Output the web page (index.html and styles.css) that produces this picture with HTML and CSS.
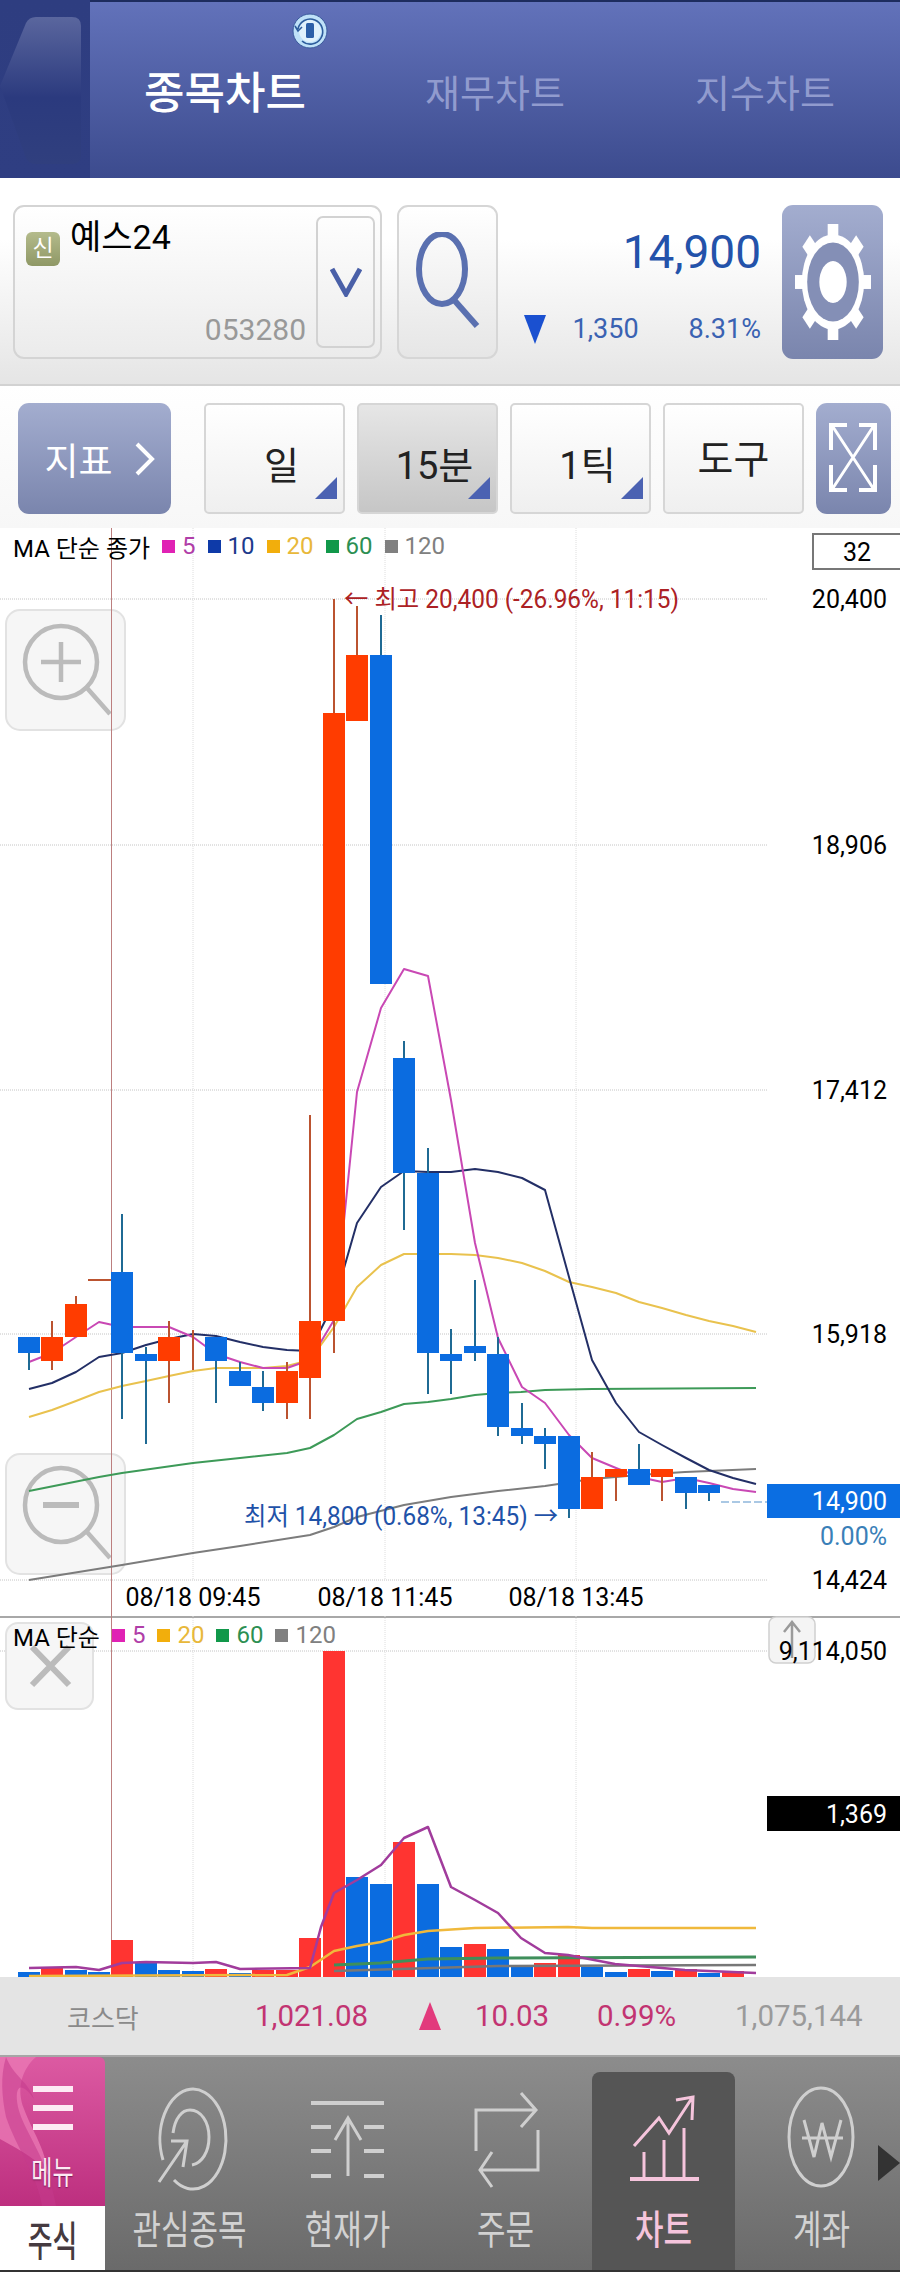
FILE: index.html
```html
<!DOCTYPE html>
<html lang="ko">
<head>
<meta charset="utf-8">
<title>종목차트</title>
<link rel="stylesheet" href="styles.css">
</head>
<body>
<div class="page">

  <header class="topbar">
    <div class="back">
      <svg class="back-icon" viewBox="0 0 90 178">
        <defs>
          <linearGradient id="backFill" x1="0" y1="0" x2="0" y2="1">
            <stop offset="0" stop-color="#5a669e"/>
            <stop offset="0.55" stop-color="#2b3a7e"/>
            <stop offset="1" stop-color="#303f7e"/>
          </linearGradient>
        </defs>
        <path d="M0 86 L26 23 Q29 17 36 17 H72 Q81 17 81 26 V155 Q81 164 72 164 H36 Q29 164 26 158 Z" fill="url(#backFill)"/>
      </svg>
    </div>
    <nav class="tabs">
      <div class="tab tab-on">종목차트</div>
      <div class="tab">재무차트</div>
      <div class="tab">지수차트</div>
    </nav>
    <svg class="sync" viewBox="0 0 38 36">
      <circle cx="19" cy="18" r="17" fill="#bfe1f8" stroke="#3a5a9c" stroke-width="1"/>
      <circle cx="19" cy="18" r="11" fill="#e0f1fc"/>
      <path d="M7 16 A12.5 12.5 0 1 1 11 28 M4 13 L7 18 L11 14" fill="none" stroke="#2d5c9c" stroke-width="1.6"/>
      <rect x="15" y="10" width="8" height="15" rx="1.5" fill="#2c5fa8"/>
    </svg>
  </header>

  <section class="stock">
    <div class="namebox">
      <div class="nameinfo">
        <div class="nameline"><span class="badge">신</span><span class="name">예스24</span></div>
        <div class="code">053280</div>
      </div>
      <div class="combo">
        <svg width="32" height="30" viewBox="0 0 32 30"><path d="M2 2 L16 27 L30 2" fill="none" stroke="#4a60a8" stroke-width="5"/></svg>
      </div>
    </div>
    <div class="searchbtn">
      <svg width="70" height="100" viewBox="0 0 70 100">
        <ellipse cx="29" cy="37" rx="23" ry="35" fill="none" stroke="#5a70b0" stroke-width="6"/>
        <path d="M42 69 L64 94" stroke="#5a70b0" stroke-width="6"/>
      </svg>
    </div>
    <div class="quote">
      <div class="price">14,900</div>
      <div class="change">
        <span class="down"></span>
        <span class="diff">1,350</span>
        <span class="rate">8.31%</span>
      </div>
    </div>
    <div class="gearbtn">
      <svg width="76" height="116" viewBox="-50 -50 100 100" preserveAspectRatio="none">
        <g fill="#fff">
          <circle r="41"/>
          <rect x="-7" y="-50" width="14" height="100"/>
          <rect x="-7" y="-50" width="14" height="100" transform="rotate(45)"/>
          <rect x="-50" y="-6" width="100" height="12"/>
          <rect x="-7" y="-50" width="14" height="100" transform="rotate(135)"/>
        </g>
        <circle r="34" fill="#848fb6"/>
        <circle r="18" fill="#fff"/>
      </svg>
    </div>
  </section>

  <section class="toolbar">
    <div class="slate-btn indicator">
      <span>지표</span>
      <svg width="20" height="34" viewBox="0 0 20 34"><path d="M2 2 L17 17 L2 32" fill="none" stroke="#fff" stroke-width="4"/></svg>
    </div>
    <div class="period period-first">일<i class="corner"></i></div>
    <div class="period period-on">15분<i class="corner"></i></div>
    <div class="period">1틱<i class="corner"></i></div>
    <div class="period tool">도구</div>
    <div class="slate-btn expand">
      <svg width="75" height="111" viewBox="814 403 75 111" fill="none" stroke="#fff" stroke-width="4">
        <path d="M829 450V425H845M857 425H873V450M829 465V490H845M857 490H873V465"/>
        <path d="M831 427L871 488M871 427L831 488" stroke-width="3"/>
      </svg>
    </div>
  </section>

  <section class="chart">
    <svg class="plot" viewBox="0 528 900 1088">
      <g class="grid">
        <path d="M0 599H767M0 845H767M0 1090H767M0 1334H767M0 1580H767"/>
        <path class="gridv" d="M193 528V1580M385 528V1580M576 528V1580"/>
      </g>

      <g class="zoom-tile">
        <rect x="6" y="610" width="119" height="120" rx="14"/>
        <rect x="6" y="1454" width="119" height="120" rx="14"/>
      </g>
      <g class="zoom-mark">
        <circle cx="61" cy="662" r="36"/>
        <path d="M87 688 L110 714 M41 662 H81 M61 642 V682"/>
        <ellipse cx="61" cy="1505" rx="36" ry="37"/>
        <path d="M87 1532 L110 1558"/>
        <path d="M43 1505 H79" stroke-width="6"/>
      </g>
      <path class="cursor" d="M111.5 528V1616"/>

      <path class="ma ma60" d="M29 1491L99 1477L122 1473L193 1463L240 1458L287 1453L310 1448L334 1435L357 1419L381 1412L404 1404L428 1402L451 1399L475 1395L498 1393L521 1392L545 1390L592 1389L756 1388"/>
      <path class="ma ma120" d="M29 1580L122 1565L193 1553L240 1546L310 1535L334 1527L357 1517L404 1505L451 1497L498 1491L545 1486L592 1479L639 1475L685 1472L756 1469"/>
      <path class="ma ma20" d="M29 1417L52 1410L76 1401L99 1392L122 1386L146 1381L169 1376L193 1371L216 1368L263 1368L287 1366L310 1360L334 1327L357 1287L381 1265L404 1254L451 1254L475 1255L498 1258L522 1263L545 1271L569 1282L592 1287L616 1293L639 1302L662 1308L686 1315L709 1321L733 1326L756 1332"/>
      <path class="ma ma10" d="M29 1389L52 1383L76 1372L99 1357L122 1353L146 1345L169 1339L193 1334L216 1336L240 1342L263 1347L287 1350L310 1351L334 1303L357 1223L381 1187L404 1171L428 1172L451 1172L475 1169L498 1172L522 1178L545 1190L569 1277L592 1360L616 1403L639 1432L662 1445L686 1458L709 1470L733 1478L756 1484"/>
      <path class="ma ma5" d="M29 1362L52 1353L76 1337L99 1322L122 1327L146 1327L169 1327L193 1337L216 1354L240 1362L263 1368L287 1368L310 1360L334 1320L357 1092L381 1008L404 969L428 976L451 1100L475 1243L498 1338L522 1387L545 1403L569 1435L592 1458L616 1468L639 1477L662 1482L686 1478L709 1483L733 1489L756 1492"/>

      <path class="wick wick-red" d="M52 1321V1370M76 1296V1304M88 1280H112M169 1321V1403M193 1330V1370M287 1362V1419M310 1115V1419M334 599V1353M357 606V655M592 1452V1477M616 1477V1501M662 1477V1501"/>
      <path class="wick wick-blue" d="M29 1353V1370M122 1214V1419M146 1347V1444M216 1361V1403M240 1362V1371M263 1371V1411M381 615V655M404 1041V1230M428 1148V1394M451 1329V1394M475 1280V1361M498 1337V1436M522 1403V1444M545 1428V1469M569 1509V1518M639 1444V1469M686 1493V1509M709 1493V1501"/>
      <path class="body-red" d="M41 1337h22v24h-22zM65 1304h22v33h-22zM158 1337h22v24h-22zM276 1371h22v32h-22zM299 1321h22v57h-22zM323 713h22v608h-22zM346 655h22v66h-22zM581 1477h22v32h-22zM605 1469h22v8h-22zM651 1469h22v8h-22z"/>
      <path class="body-blue" d="M18 1337h22v16h-22zM111 1272h22v81h-22zM135 1354h22v7h-22zM205 1337h22v24h-22zM229 1371h22v15h-22zM252 1387h22v16h-22zM370 655h22v329h-22zM393 1058h22v115h-22zM417 1173h22v180h-22zM440 1354h22v7h-22zM464 1346h22v7h-22zM487 1354h22v73h-22zM511 1428h22v8h-22zM534 1436h22v8h-22zM558 1436h22v73h-22zM628 1469h22v16h-22zM675 1477h22v16h-22zM698 1485h22v8h-22z"/>
      <path class="lastdash" d="M721 1502H767"/>

      <text class="note note-high" x="344" y="608" textLength="335" lengthAdjust="spacingAndGlyphs">← 최고 20,400 (-26.96%, 11:15)</text>
      <text class="note note-low" x="244" y="1525" textLength="314" lengthAdjust="spacingAndGlyphs">최저 14,800 (0.68%, 13:45) →</text>

      <g class="axis">
        <text x="887" y="608">20,400</text>
        <text x="887" y="854">18,906</text>
        <text x="887" y="1099">17,412</text>
        <text x="887" y="1343">15,918</text>
        <text x="887" y="1589">14,424</text>
      </g>
      <rect class="lasttag" x="767" y="1484" width="133" height="34"/>
      <g class="axis">
        <text class="on-tag" x="887" y="1510">14,900</text>
        <text class="rate-zero" x="887" y="1545">0.00%</text>
      </g>
      <g class="axis dates">
        <text x="193" y="1606">08/18 09:45</text>
        <text x="385" y="1606">08/18 11:45</text>
        <text x="576" y="1606">08/18 13:45</text>
      </g>
    </svg>
    <div class="legend">
      <span class="legend-title">MA 단순 종가</span>
      <span class="key c5">5</span>
      <span class="key c10">10</span>
      <span class="key c20">20</span>
      <span class="key c60">60</span>
      <span class="key c120">120</span>
    </div>
    <div class="rangebox">32</div>
  </section>

  <section class="volume">
    <svg class="plot" viewBox="0 1616 900 361">
      <g class="grid">
        <path d="M0 1651H767"/>
        <path class="gridv" d="M193 1616V1977M385 1616V1977M576 1616V1977"/>
      </g>
      <path class="cursor" d="M111.5 1616V1977"/>
      <rect class="close-tile" x="6" y="1623" width="87" height="86" rx="12"/>
      <path class="close-mark" d="M32 1647 L69 1685 M69 1647 L32 1685"/>
      <rect class="up-tile" x="769" y="1617" width="46" height="46" rx="7"/>
      <path class="up-mark" d="M792 1658 V1622 M784 1632 L792 1622 L800 1632"/>

      <path class="vol-red" d="M41 1968h22v9h-22zM111 1940h22v37h-22zM205 1969h22v8h-22zM252 1970h22v7h-22zM276 1970h22v7h-22zM299 1938h22v39h-22zM323 1651h22v326h-22zM393 1842h22v135h-22zM464 1944h22v33h-22zM534 1963h22v14h-22zM558 1955h22v22h-22zM628 1969h22v8h-22zM675 1969h22v8h-22zM722 1971h22v6h-22z"/>
      <path class="vol-blue" d="M18 1972h22v5h-22zM65 1970h22v7h-22zM88 1972h22v5h-22zM135 1963h22v14h-22zM158 1970h22v7h-22zM182 1971h22v6h-22zM229 1973h22v4h-22zM346 1877h22v100h-22zM370 1884h22v93h-22zM417 1884h22v93h-22zM440 1947h22v30h-22zM487 1949h22v28h-22zM511 1965h22v12h-22zM581 1967h22v10h-22zM605 1972h22v5h-22zM651 1971h22v6h-22zM698 1973h22v4h-22z"/>

      <path class="ma vma120" d="M334 1971L498 1966L756 1965"/>
      <path class="ma vma60" d="M334 1965L381 1963L428 1959L498 1958L756 1957"/>
      <path class="ma vma20" d="M29 1976L287 1975L310 1967L334 1951L357 1946L381 1942L404 1935L428 1931L475 1928L568 1927L592 1928L756 1928"/>
      <path class="ma vma5" d="M29 1968L76 1967L99 1970L122 1963L146 1962L193 1963L216 1962L240 1969L310 1968L321 1927L334 1893L357 1880L381 1865L404 1838L428 1827L451 1887L475 1900L498 1913L521 1938L545 1953L568 1955L615 1964L662 1968L685 1970L756 1973"/>

      <g class="axis">
        <text x="887" y="1660">9,114,050</text>
      </g>
      <rect class="volumetag" x="767" y="1796" width="133" height="35"/>
      <g class="axis">
        <text class="on-tag" x="887" y="1823">1,369</text>
      </g>
    </svg>
    <div class="legend">
      <span class="legend-title">MA 단순</span>
      <span class="key c5">5</span>
      <span class="key c20">20</span>
      <span class="key c60">60</span>
      <span class="key c120">120</span>
    </div>
  </section>

  <section class="index">
    <span class="idx-name">코스닥</span>
    <span class="idx-val">1,021.08</span>
    <span class="up"></span>
    <span class="idx-diff">10.03</span>
    <span class="idx-rate">0.99%</span>
    <span class="idx-vol">1,075,144</span>
  </section>

  <footer class="nav">
    <div class="side">
      <div class="menu">
        <svg class="swirl" viewBox="0 0 105 149">
          <path d="M0 0H36 C22 12 16 32 24 52 C32 74 46 92 48 118 C40 104 22 94 0 82 Z" fill="#ea78b4" opacity=".8"/>
          <path d="M6 0 C14 20 28 24 34 42 C20 22 14 30 18 50 C24 76 48 100 56 149 H42 C38 120 16 90 6 60 C2 40 0 20 6 0Z" fill="#c43a8c" opacity=".55"/>
        </svg>
        <i class="bar"></i><i class="bar"></i><i class="bar"></i>
        <span class="menu-text">메뉴</span>
      </div>
      <div class="market"><span class="market-text">주식</span></div>
    </div>
    <div class="navtabs">
      <div class="navtab">
        <svg viewBox="119 2072 143 133">
          <path d="M164 2160 A33 50 0 1 1 175 2180"/>
          <path d="M174 2133 C176 2118 183 2110 191 2110 C202 2110 210 2122 210 2137 C210 2152 203 2163 193 2165"/>
          <path d="M160 2182 L188 2141 M172 2141 L188 2141 L184 2167"/>
        </svg>
        <span class="tall">관심종목</span>
      </div>
      <div class="navtab">
        <svg viewBox="277 2072 143 133">
          <path d="M312 2103H385M312 2127H332M365 2127H385M312 2151H332M365 2151H385M312 2176H332M365 2176H385" stroke-width="4"/>
          <path d="M349 2176V2118M336 2140L349 2118L362 2140"/>
        </svg>
        <span class="tall">현재가</span>
      </div>
      <div class="navtab">
        <svg viewBox="433 2072 143 133">
          <path d="M475 2151V2110H534M520 2093L535 2110L520 2127"/>
          <path d="M537 2130V2170H480M491 2152L479 2170L491 2187"/>
        </svg>
        <span class="tall">주문</span>
      </div>
      <div class="navtab navtab-on">
        <svg viewBox="592 2072 143 133">
          <path d="M630 2179H699" stroke-width="4"/>
          <path d="M644 2179V2152M664 2179V2140M684 2179V2128"/>
          <path d="M634 2146L659 2118L669 2133L692 2098M676 2100L693 2097L692 2120"/>
        </svg>
        <span class="tall">차트</span>
      </div>
      <div class="navtab">
        <svg viewBox="750 2072 143 133">
          <ellipse cx="821" cy="2137" rx="32" ry="49"/>
          <path d="M804 2120L814 2157L822 2123L831 2157L841 2120M802 2138H843"/>
        </svg>
        <span class="tall">계좌</span>
      </div>
    </div>
    <i class="navmore"></i>
  </footer>

</div>
</body>
</html>
```

FILE: styles.css
```css
* {
  box-sizing: border-box;
}
body {
  margin: 0;
  background: #fff;
  font-family: Roboto, "Noto Sans CJK KR", sans-serif;
}
.page {
  width: 900px;
  height: 2272px;
  overflow: hidden;
}

/* top tabs */
.topbar {
  position: relative;
  display: flex;
  height: 178px;
  border-top: 2px solid #1d2c5e;
  background: linear-gradient(#6272ba, #3c4b8e);
}
.back {
  width: 90px;
  margin-top: -2px;
  background: linear-gradient(#2e3d80, #2f3e82);
}
.back-icon {
  display: block;
  width: 90px;
  height: 178px;
}
.tabs {
  flex: 1;
  display: grid;
  grid-template-columns: repeat(3, 270px);
  align-items: center;
}
.tab {
  text-align: center;
  font-size: 38px;
  color: #919bce;
}
.tab-on {
  font-size: 44px;
  font-weight: 500;
  color: #fff;
}
.sync {
  position: absolute;
  left: 291px;
  top: 11px;
  width: 38px;
  height: 36px;
}

/* stock row */
.stock {
  display: flex;
  height: 208px;
  padding: 27px 17px 0 13px;
  background: linear-gradient(#fff, #fff 30%, #e5e5e5);
  border-bottom: 2px solid #d2d2d2;
}
.namebox {
  display: flex;
  width: 369px;
  height: 154px;
  padding: 9px 5px 9px 0;
  border: 2px solid #d4d4d4;
  border-radius: 11px;
  background: linear-gradient(#fff, #ebebeb);
}
.nameinfo {
  flex: 1;
  display: flex;
  flex-direction: column;
  justify-content: space-between;
}
.nameline {
  display: flex;
  align-items: flex-start;
  padding-left: 11px;
}
.badge {
  width: 34px;
  height: 34px;
  margin-top: 16px;
  border-radius: 6px;
  background: linear-gradient(#b4bb8c, #8f9866);
  color: #fff;
  font-size: 23px;
  line-height: 33px;
  text-align: center;
}
.name {
  margin-left: 10px;
  font-size: 34px;
  line-height: 42px;
  color: #000;
}
.code {
  padding: 0 10px 3px 0;
  text-align: right;
  font-size: 30px;
  line-height: 30px;
  color: #999;
}
.combo {
  display: flex;
  align-items: center;
  justify-content: center;
  width: 59px;
  border: 2px solid #d2d2d2;
  border-radius: 7px;
}
.searchbtn {
  display: flex;
  align-items: center;
  justify-content: center;
  width: 101px;
  height: 154px;
  margin-left: 15px;
  border: 2px solid #d6d6d6;
  border-radius: 11px;
  background: linear-gradient(#fff, #e6e6e6);
}
.quote {
  width: 284px;
  padding-right: 21px;
}
.price {
  margin-top: 22px;
  text-align: right;
  font-size: 46px;
  line-height: 50px;
  color: #2352aa;
}
.change {
  display: flex;
  align-items: center;
  justify-content: flex-end;
  margin-top: 36px;
  font-size: 27px;
  color: #3a62b2;
}
.down {
  width: 0;
  height: 0;
  margin-right: 27px;
  border-left: 11px solid transparent;
  border-right: 11px solid transparent;
  border-top: 29px solid #1a50d0;
}
.rate {
  margin-left: 50px;
}
.gearbtn {
  display: flex;
  align-items: center;
  justify-content: center;
  width: 101px;
  height: 154px;
  border-radius: 11px;
  background: linear-gradient(#a3adcf, #7a85ad);
}

/* period toolbar */
.toolbar {
  display: flex;
  gap: 12px;
  height: 142px;
  padding: 17px 0 0 18px;
  background: linear-gradient(#fff, #f7f7f7);
}
.slate-btn {
  display: flex;
  align-items: center;
  justify-content: center;
  height: 111px;
  border-radius: 11px;
  background: linear-gradient(#a3adcf, #7a85ad);
}
.indicator {
  width: 153px;
  gap: 22px;
  padding-left: 10px;
  color: #fff;
  font-size: 37px;
}
.expand {
  width: 75px;
}
.period {
  position: relative;
  width: 141px;
  height: 111px;
  padding: 39px 0 0 14px;
  border: 2px solid #d6d6d6;
  border-radius: 5px;
  background: linear-gradient(#fff, #efefef);
  text-align: center;
  font-size: 38px;
  line-height: 44px;
  color: #222;
}
.period-first {
  margin-left: 21px;
}
.period-on {
  background: linear-gradient(#e6e6e6, #c6c6c6);
}
.tool {
  padding: 33px 0 0;
  font-size: 39px;
}
.corner {
  position: absolute;
  right: 6px;
  bottom: 13px;
  width: 0;
  height: 0;
  border-left: 22px solid transparent;
  border-bottom: 22px solid #4b62b2;
}

/* chart panels */
.chart {
  position: relative;
  height: 1088px;
}
.volume {
  position: relative;
  height: 361px;
  border-top: 2px solid #a8a8a8;
}
.plot {
  display: block;
  width: 900px;
  height: 100%;
}
.volume .plot {
  margin-top: -2px;
  height: 361px;
}
.grid path {
  fill: none;
  stroke: #c4c4c4;
  stroke-width: 1;
  stroke-dasharray: 1 1;
}
.grid .gridv {
  stroke: #dedede;
}
.cursor {
  fill: none;
  stroke: #bc7f7f;
  stroke-width: 1;
}
.zoom-tile rect,
.close-tile {
  fill: #f6f6f6;
  stroke: #e2e2e2;
  stroke-width: 2;
}
.zoom-mark {
  fill: none;
  stroke: #bbb;
  stroke-width: 4.5;
}
.close-mark {
  fill: none;
  stroke: #bbb;
  stroke-width: 6;
}
.up-tile {
  fill: #f4f4f4;
  stroke: #d0d0d0;
  stroke-width: 1.5;
}
.up-mark {
  fill: none;
  stroke: #9a9a9a;
  stroke-width: 2.5;
}
.ma {
  fill: none;
  stroke-width: 2;
  stroke-linejoin: round;
}
.ma5 { stroke: #c948b4; }
.ma10 { stroke: #232f66; }
.ma20 { stroke: #e9c24e; }
.ma60 { stroke: #3d9a58; }
.ma120 { stroke: #7c7c7c; }
.vma5 { stroke: #a13c9c; stroke-width: 2.5; }
.vma20 { stroke: #f0b93c; stroke-width: 2.5; }
.vma60 { stroke: #3f8f5b; stroke-width: 3; }
.vma120 { stroke: #777; stroke-width: 2.5; }
.wick {
  fill: none;
  stroke-width: 2;
}
.wick-red { stroke: #bb5330; }
.wick-blue { stroke: #1f6a94; }
.body-red { fill: #ff3c00; }
.body-blue { fill: #0b6ce0; }
.vol-red { fill: #ff3431; }
.vol-blue { fill: #0b6ce0; }
.lastdash {
  fill: none;
  stroke: #8fb6dc;
  stroke-width: 1.5;
  stroke-dasharray: 8 3;
}
.note {
  font-size: 25px;
}
.note-high { fill: #ac2124; }
.note-low { fill: #1f52a8; }
.axis text {
  font-size: 25px;
  fill: #000;
  text-anchor: end;
}
.axis .on-tag { fill: #fff; }
.axis .rate-zero { fill: #3a80b8; }
.dates text {
  text-anchor: middle;
}
.lasttag { fill: #0b6ee2; }
.volumetag { fill: #000; }

.legend {
  position: absolute;
  left: 13px;
  top: 3px;
  display: flex;
  align-items: center;
  height: 30px;
  font-size: 24px;
  color: #000;
}
.volume .legend {
  top: 2px;
}
.key {
  display: flex;
  align-items: center;
  margin-left: 12px;
}
.key::before {
  content: "";
  width: 13px;
  height: 13px;
  margin-right: 7px;
}
.c5 { color: #b03ea8; }
.c5::before { background: #e022b4; }
.c10 { color: #1c3a8c; }
.c10::before { background: #0e3aa8; }
.c20 { color: #e8b83a; }
.c20::before { background: #f2ae0c; }
.c60 { color: #2c8f52; }
.c60::before { background: #11984a; }
.c120 { color: #808080; }
.c120::before { background: #808080; }
.rangebox {
  position: absolute;
  right: 0;
  top: 5px;
  width: 88px;
  height: 37px;
  border: 2px solid #777;
  border-right: 0;
  text-align: center;
  font-size: 25px;
  line-height: 36px;
  color: #000;
}

/* index strip */
.index {
  position: relative;
  display: flex;
  align-items: center;
  height: 80px;
  background: #e4e4e4;
  border-bottom: 2px solid #a6a6a6;
  font-size: 29.5px;
  color: #c23472;
}
.idx-name {
  margin-left: 67px;
  width: 188px;
  font-size: 26px;
  color: #8a8a8a;
}
.idx-val {
  width: 164px;
}
.up {
  width: 0;
  height: 0;
  margin-right: 34px;
  border-left: 11px solid transparent;
  border-right: 11px solid transparent;
  border-bottom: 28px solid #e23a7c;
}
.idx-diff {
  width: 122px;
}
.idx-rate {
  width: 138px;
}
.idx-vol {
  color: #9a9a9a;
}

/* bottom nav */
.nav {
  position: relative;
  display: flex;
  height: 215px;
  background: linear-gradient(#8c8c8c, #6a6a6a);
  border-bottom: 2px solid #333;
}
.side {
  display: flex;
  flex-direction: column;
  width: 105px;
}
.menu {
  position: relative;
  display: flex;
  flex-direction: column;
  align-items: center;
  height: 149px;
  padding-top: 29px;
  overflow: hidden;
  border-radius: 0 6px 0 0;
  background: linear-gradient(#dc5aa2, #bd2f7f);
}
.swirl {
  position: absolute;
  left: 0;
  top: 0;
  width: 105px;
  height: 149px;
}
.bar {
  position: relative;
  width: 40px;
  height: 6px;
  margin-bottom: 13px;
  background: #fdeaf4;
}
.menu-text {
  position: relative;
  margin-top: 10px;
  font-size: 23px;
  color: #fdeaf4;
  text-shadow: 0 1px 1px #7a1c55;
  transform: scaleY(1.4);
}
.market {
  flex: 1;
  display: flex;
  align-items: center;
  justify-content: center;
  background: #fff;
  color: #453a40;
}
.market-text {
  display: inline-block;
  font-size: 27px;
  font-weight: 500;
  transform: scaleY(1.5);
}
.navtabs {
  display: flex;
  gap: 15px;
  padding: 15px 0 0 13px;
}
.navtab {
  display: flex;
  flex-direction: column;
  align-items: center;
  width: 143px;
  border-radius: 8px 8px 0 0;
  color: #d2d2d2;
  font-size: 31px;
}
.navtab svg {
  display: block;
  width: 143px;
  height: 133px;
  fill: none;
  stroke: #cfcfcf;
  stroke-width: 3;
}
.navtab-on {
  background: #555;
  color: #f5c4dc;
  font-weight: 500;
}
.navtab-on svg {
  stroke: #f5c4dc;
}
.tall {
  display: inline-block;
  line-height: 40px;
  margin-top: 6px;
  transform: scaleY(1.3);
}
.navmore {
  position: absolute;
  right: 0;
  top: 88px;
  width: 0;
  height: 0;
  border-top: 18px solid transparent;
  border-bottom: 18px solid transparent;
  border-left: 22px solid #333;
}
```
